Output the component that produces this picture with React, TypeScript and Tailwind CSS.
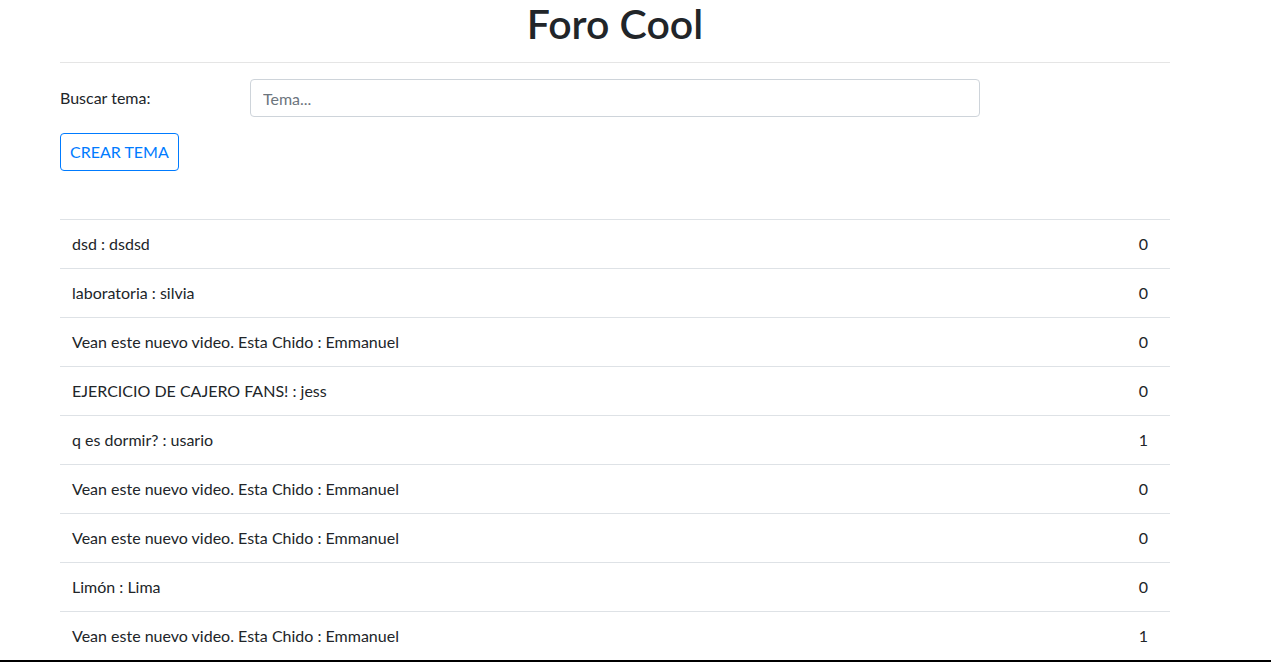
export default function App() {
  const rows: [string, string][] = [
    ["dsd : dsdsd", "0"],
    ["laboratoria : silvia", "0"],
    ["Vean este nuevo video. Esta Chido : Emmanuel", "0"],
    ["EJERCICIO DE CAJERO FANS! : jess", "0"],
    ["q es dormir? : usario", "1"],
    ["Vean este nuevo video. Esta Chido : Emmanuel", "0"],
    ["Vean este nuevo video. Esta Chido : Emmanuel", "0"],
    ["Limón : Lima", "0"],
    ["Vean este nuevo video. Esta Chido : Emmanuel", "1"],
  ];
  return (
    <div
      className="h-[662px] overflow-hidden bg-white text-[#212529] relative"
      style={{ fontFamily: "Lato, 'Noto Sans', sans-serif" }}
    >
      <div className="ml-[60px] w-[1110px]">
        <h1 className="text-[41px] leading-[48px] font-semibold text-center text-[#212529]">Foro Cool</h1>
        <div className="mt-[14px] border-t border-[#e5e5e5]" />
        <div className="flex items-center mt-[16px]">
          <label className="w-[190px] text-[16px]">Buscar tema:</label>
          <input
            className="w-[730px] h-[38px] border border-[#ced4da] rounded-[4px] px-[12px] text-[16px] placeholder:text-[#6c757d] outline-none"
            placeholder="Tema..."
          />
        </div>
        <button className="mt-[16px] h-[38px] px-[9px] border border-[#007bff] rounded-[4px] text-[#007bff] text-[16px]">
          CREAR TEMA
        </button>
        <div className="mt-[48px]">
          {rows.map(([t, n], i) => (
            <div key={i} className="flex justify-between border-t border-[#dee2e6] h-[49px] items-center pl-[12px] pr-[22px] text-[16px]">
              <span>{t}</span>
              <span>{n}</span>
            </div>
          ))}
        </div>
      </div>
      <div className="absolute left-0 right-0 bottom-0 h-[2px] bg-black" />
    </div>
  );
}
